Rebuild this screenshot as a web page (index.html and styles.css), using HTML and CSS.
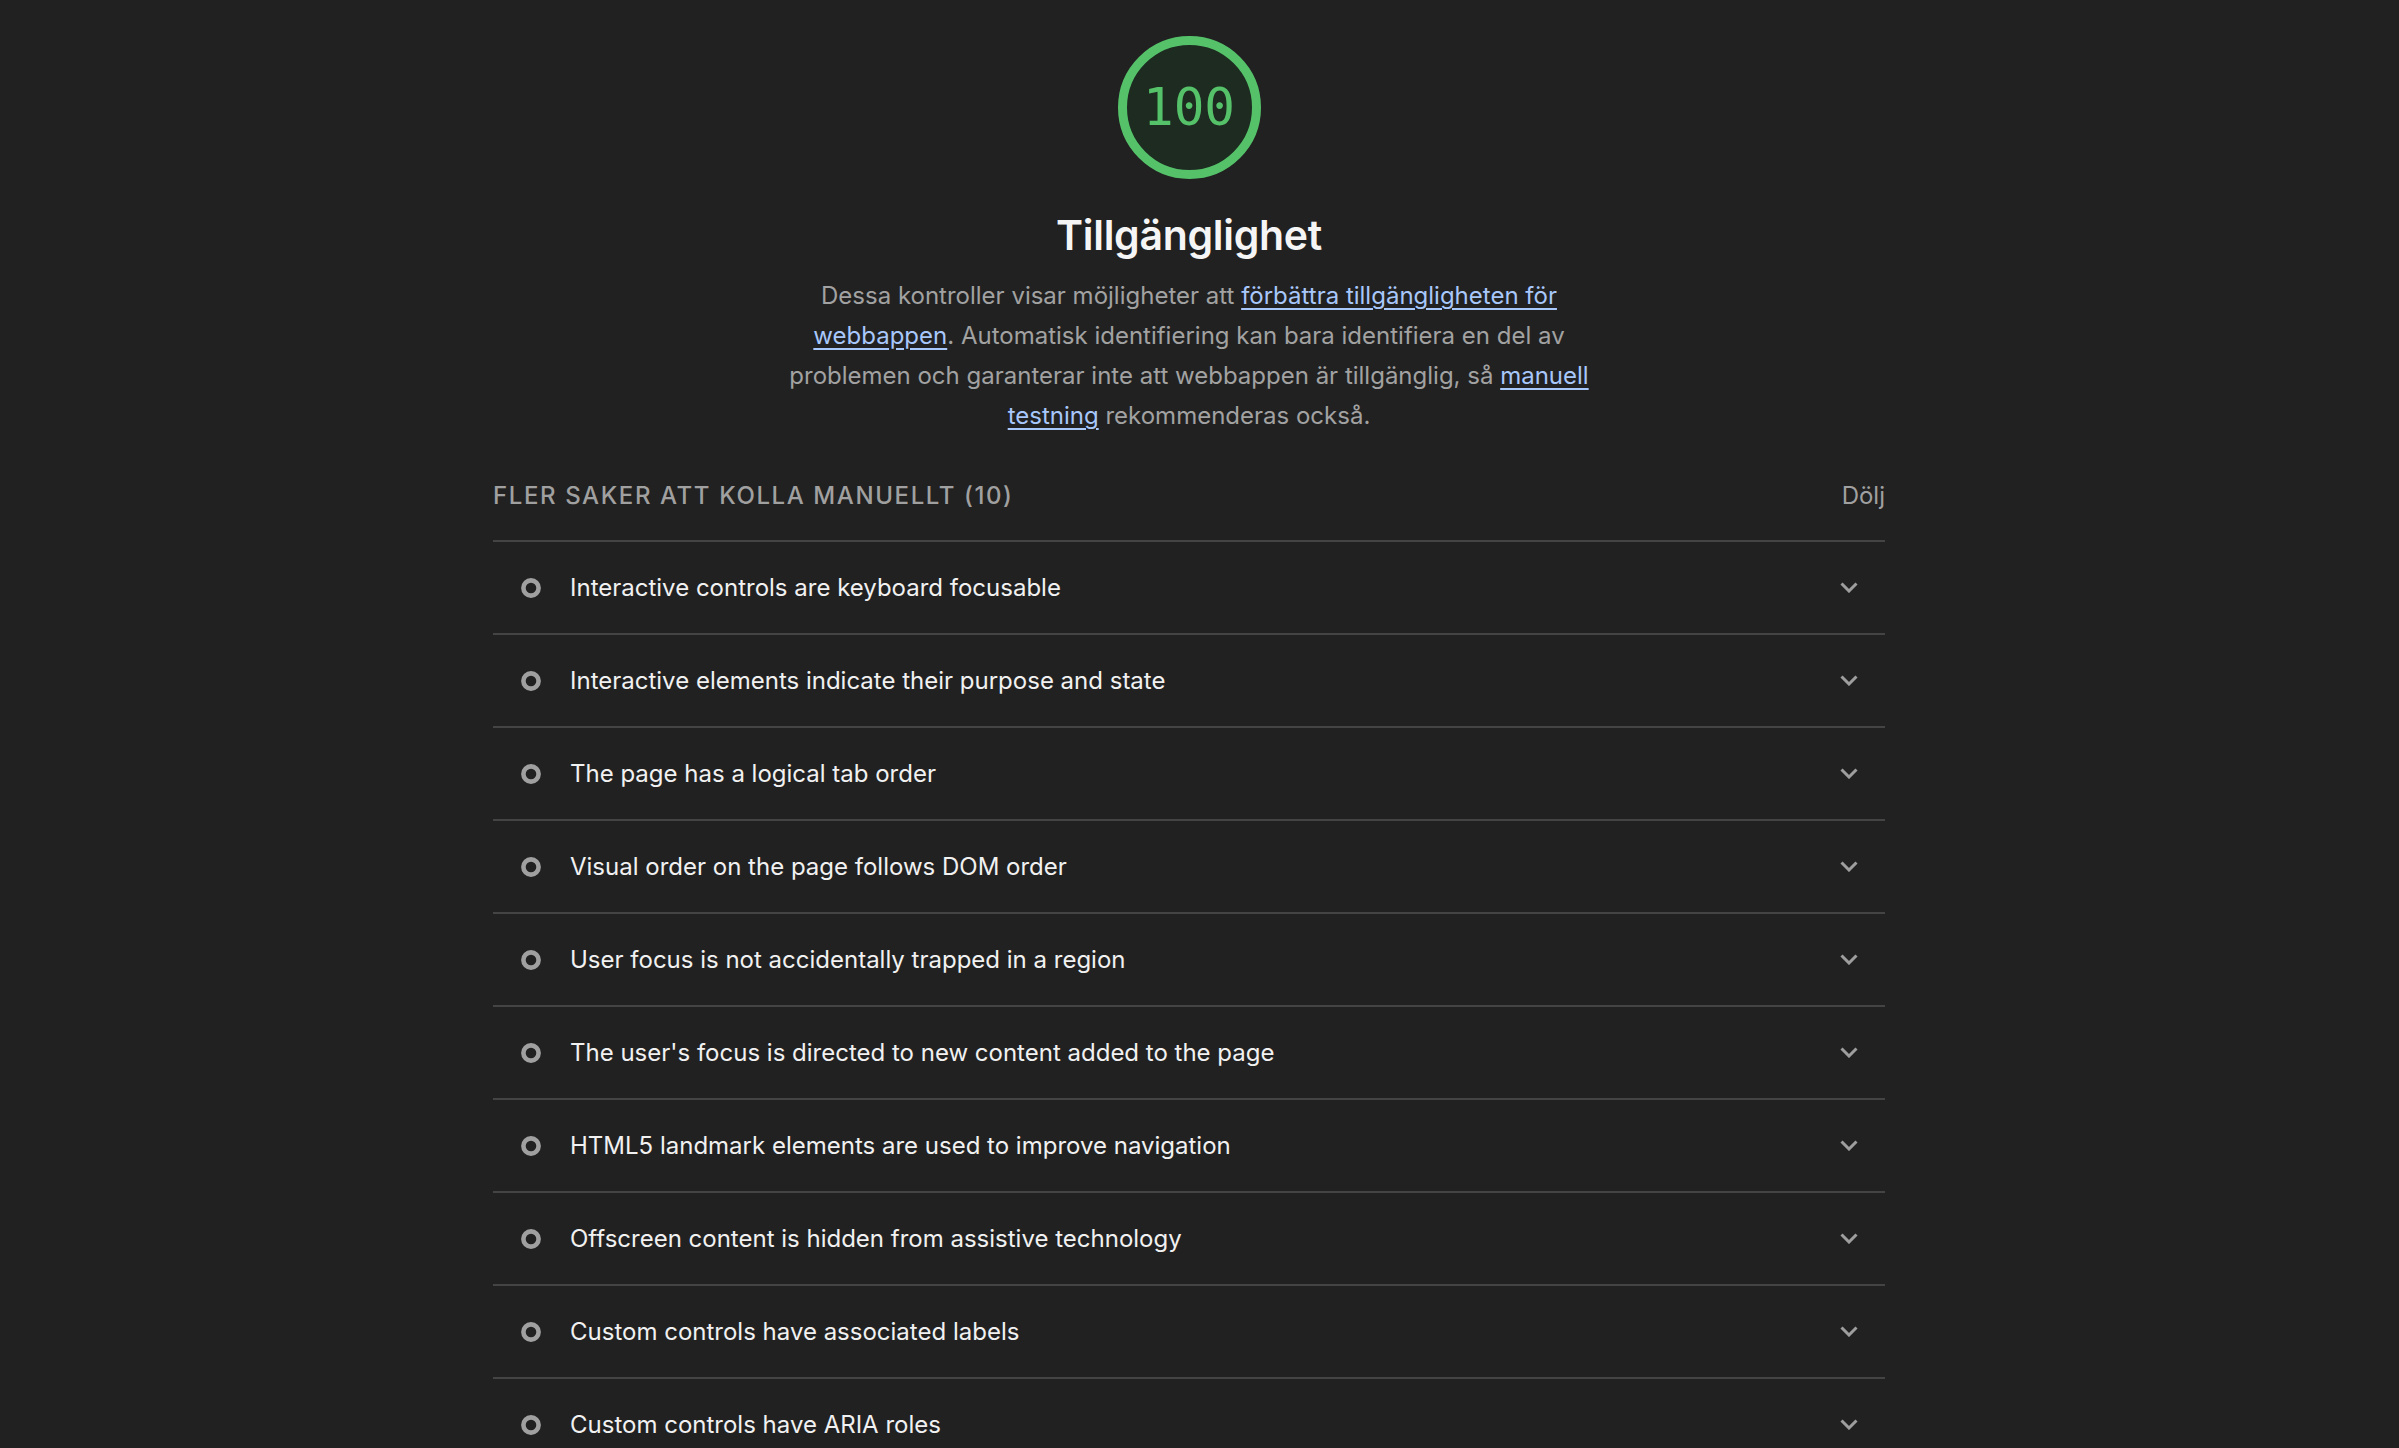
FILE: index.html
```html
<!DOCTYPE html>
<html lang="sv">
<head>
<meta charset="utf-8">
<title>Tillgänglighet</title>
<link rel="stylesheet" href="styles.css">
</head>
<body>
<div class="viewport">
  <main class="category">
    <header class="category-header">
      <div class="gauge">
        <svg class="gauge-svg" viewBox="0 0 143 143" width="143" height="143" aria-hidden="true">
          <circle cx="71.5" cy="71.5" r="67" class="gauge-base"></circle>
        </svg>
        <span class="gauge-value">100</span>
      </div>
      <h1 class="category-title">Tillgänglighet</h1>
      <p class="category-desc">Dessa kontroller visar möjligheter att <a href="#">förbättra tillgängligheten för<br>webbappen</a>. Automatisk identifiering kan bara identifiera en del av<br>problemen och garanterar inte att webbappen är tillgänglig, så <a href="#">manuell<br>testning</a> rekommenderas också.</p>
    </header>

    <section class="group">
      <div class="group-header">
        <span class="group-title">Fler saker att kolla manuellt (10)</span>
        <span class="group-toggle">Dölj</span>
      </div>
      <ul class="audit-list">
        <li class="audit"><svg class="audit-icon" viewBox="0 0 20 20" width="20" height="20"><circle cx="10" cy="10" r="7.6"/></svg><span class="audit-title">Interactive controls are keyboard focusable</span><svg class="chevron" viewBox="0 0 18 11" width="18" height="11"><path d="M1.5 1.5 L9 9 L16.5 1.5"/></svg></li>
        <li class="audit"><svg class="audit-icon" viewBox="0 0 20 20" width="20" height="20"><circle cx="10" cy="10" r="7.6"/></svg><span class="audit-title">Interactive elements indicate their purpose and state</span><svg class="chevron" viewBox="0 0 18 11" width="18" height="11"><path d="M1.5 1.5 L9 9 L16.5 1.5"/></svg></li>
        <li class="audit"><svg class="audit-icon" viewBox="0 0 20 20" width="20" height="20"><circle cx="10" cy="10" r="7.6"/></svg><span class="audit-title">The page has a logical tab order</span><svg class="chevron" viewBox="0 0 18 11" width="18" height="11"><path d="M1.5 1.5 L9 9 L16.5 1.5"/></svg></li>
        <li class="audit"><svg class="audit-icon" viewBox="0 0 20 20" width="20" height="20"><circle cx="10" cy="10" r="7.6"/></svg><span class="audit-title">Visual order on the page follows DOM order</span><svg class="chevron" viewBox="0 0 18 11" width="18" height="11"><path d="M1.5 1.5 L9 9 L16.5 1.5"/></svg></li>
        <li class="audit"><svg class="audit-icon" viewBox="0 0 20 20" width="20" height="20"><circle cx="10" cy="10" r="7.6"/></svg><span class="audit-title">User focus is not accidentally trapped in a region</span><svg class="chevron" viewBox="0 0 18 11" width="18" height="11"><path d="M1.5 1.5 L9 9 L16.5 1.5"/></svg></li>
        <li class="audit"><svg class="audit-icon" viewBox="0 0 20 20" width="20" height="20"><circle cx="10" cy="10" r="7.6"/></svg><span class="audit-title">The user's focus is directed to new content added to the page</span><svg class="chevron" viewBox="0 0 18 11" width="18" height="11"><path d="M1.5 1.5 L9 9 L16.5 1.5"/></svg></li>
        <li class="audit"><svg class="audit-icon" viewBox="0 0 20 20" width="20" height="20"><circle cx="10" cy="10" r="7.6"/></svg><span class="audit-title">HTML5 landmark elements are used to improve navigation</span><svg class="chevron" viewBox="0 0 18 11" width="18" height="11"><path d="M1.5 1.5 L9 9 L16.5 1.5"/></svg></li>
        <li class="audit"><svg class="audit-icon" viewBox="0 0 20 20" width="20" height="20"><circle cx="10" cy="10" r="7.6"/></svg><span class="audit-title">Offscreen content is hidden from assistive technology</span><svg class="chevron" viewBox="0 0 18 11" width="18" height="11"><path d="M1.5 1.5 L9 9 L16.5 1.5"/></svg></li>
        <li class="audit"><svg class="audit-icon" viewBox="0 0 20 20" width="20" height="20"><circle cx="10" cy="10" r="7.6"/></svg><span class="audit-title">Custom controls have associated labels</span><svg class="chevron" viewBox="0 0 18 11" width="18" height="11"><path d="M1.5 1.5 L9 9 L16.5 1.5"/></svg></li>
        <li class="audit"><svg class="audit-icon" viewBox="0 0 20 20" width="20" height="20"><circle cx="10" cy="10" r="7.6"/></svg><span class="audit-title">Custom controls have ARIA roles</span><svg class="chevron" viewBox="0 0 18 11" width="18" height="11"><path d="M1.5 1.5 L9 9 L16.5 1.5"/></svg></li>
      </ul>
    </section>
  </main>
</div>
</body>
</html>
```
FILE: styles.css
```css
html, body {
  margin: 0;
  padding: 0;
  background: #212121;
}
body {
  height: 1448px;
  overflow: hidden;
  font-family: Inter, "Noto Sans", "Liberation Sans", sans-serif;
  color: #f1f1f1;
}
.viewport {
  padding-right: 21px;
}
.category {
  width: 1392px;
  margin: 0 auto;
}
.category-header {
  display: flex;
  flex-direction: column;
  align-items: center;
  padding-top: 36px;
}
.gauge {
  position: relative;
  width: 143px;
  height: 143px;
}
.gauge-svg {
  display: block;
}
.gauge-base {
  fill: #1d2b21;
  stroke: #55c26a;
  stroke-width: 9;
}
.gauge-value {
  position: absolute;
  inset: 0;
  display: flex;
  align-items: center;
  justify-content: center;
  font-family: "DejaVu Sans Mono", "Liberation Mono", monospace;
  font-size: 51px;
  color: #55c26a;
}
.category-title {
  margin: 32px 0 0;
  font-size: 41px;
  line-height: 48px;
  font-weight: 600;
  color: #f5f5f5;
  letter-spacing: -0.3px;
}
.category-desc {
  margin: 17px 0 0;
  font-size: 24px;
  line-height: 40px;
  color: #a2a2a2;
  text-align: center;
}
.category-desc a {
  color: #a8c7fa;
  text-decoration: underline;
  text-decoration-thickness: 2px;
  text-underline-offset: 4px;
}
.group {
  margin-top: 35px;
}
.group-header {
  display: flex;
  justify-content: space-between;
  align-items: center;
  height: 48px;
  padding-bottom: 21px;
}
.group-title {
  text-transform: uppercase;
  font-size: 24px;
  font-weight: 500;
  letter-spacing: 1.6px;
  color: #a0a0a0;
}
.group-toggle {
  font-size: 24px;
  color: #a0a0a0;
}
.audit-list {
  list-style: none;
  margin: 0;
  padding: 0;
  border-top: 2px solid #444;
}
.audit {
  display: flex;
  align-items: center;
  height: 91px;
  border-bottom: 2px solid #444;
  padding: 0 27px 0 28px;
}
.audit-icon {
  flex: none;
  fill: none;
  stroke: #a0a0a0;
  stroke-width: 4.6;
}
.audit-title {
  flex: 1;
  margin-left: 29px;
  font-size: 24px;
  color: #f1f1f1;
}
.chevron {
  flex: none;
  fill: none;
  stroke: #9e9e9e;
  stroke-width: 3;
}
```
